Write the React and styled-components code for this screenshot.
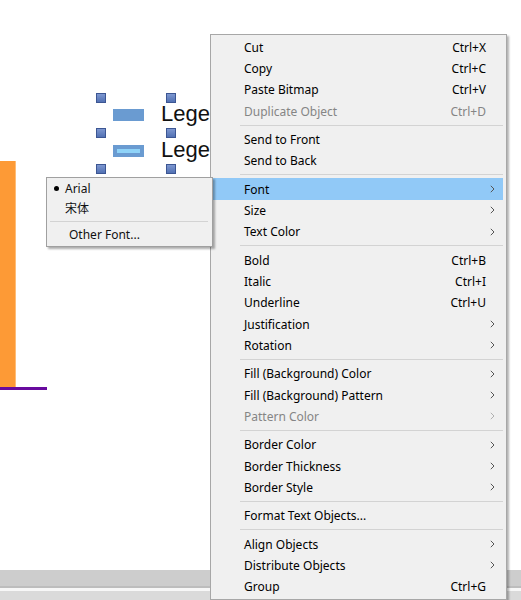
import React from 'react';
import styled, { createGlobalStyle } from 'styled-components';

const GlobalStyle = createGlobalStyle`
  html, body {
    margin: 0;
    padding: 0;
    background: #ffffff;
    overflow: hidden;
  }
`;

const Window = styled.div`
  position: relative;
  width: 521px;
  height: 600px;
  display: flex;
  flex-direction: column;
  overflow: hidden;
  font-family: "Noto Sans", "Noto Sans CJK SC", sans-serif;
`;

const Canvas = styled.div`
  position: relative;
  flex: 1;
  background: #ffffff;
`;

const BottomArea = styled.div`
  display: flex;
  flex-direction: column;
  height: 30px;
`;

const ScrollTrack = styled.div`
  height: 16px;
  background: #cdcdcd;
  border-bottom: 2px solid #bdbdbd;
`;

const Gap = styled.div`
  height: 3px;
  background: #f7f7f7;
`;

const StatusBar = styled.div`
  flex: 1;
  background: #dadada;
`;

/* chart objects sitting on the canvas */
const Bar = styled.div`
  position: absolute;
  left: 0;
  top: 161px;
  width: 16px;
  height: 226px;
  background: #fd9a36;
  box-shadow: inset -1px 0 0 #ffbd77;
`;

const Axis = styled.div`
  position: absolute;
  left: 0;
  top: 387px;
  width: 47px;
  height: 2.5px;
  background: #680a9e;
`;

const Handle = styled.div`
  position: absolute;
  left: ${p => p.x}px;
  top: ${p => p.y}px;
  width: 8px;
  height: 8px;
  background: linear-gradient(#7d97d0, #5271b3);
  border: 1px solid #3c5693;
`;

const Swatch = styled.div`
  position: absolute;
  left: 113px;
  top: ${p => p.y}px;
  width: 31px;
  height: 12px;
  background: #6a9bd1;
  display: flex;
  align-items: center;
  justify-content: center;
`;

const SwatchLine = styled.div`
  width: 23px;
  height: 4px;
  background: #8fd3f8;
`;

const LegendText = styled.div`
  position: absolute;
  left: 161px;
  top: ${p => p.y}px;
  font-family: "Liberation Sans", Arial, sans-serif;
  font-size: 22px;
  line-height: 22px;
  color: #111;
  white-space: nowrap;
`;

/* context menu */
const Menu = styled.div`
  position: absolute;
  left: 210px;
  top: 34px;
  width: 290px;
  padding: 1.5px 3px 2px 2px;
  background: #f0f0f0;
  border: 1px solid #a7a7a7;
  box-shadow: 2px 2px 2px rgba(0, 0, 0, 0.3);
  font-size: 12px;
  color: #000;
`;

const Item = styled.div`
  display: grid;
  grid-template-columns: 1fr auto 17px;
  align-items: center;
  height: 21.33px;
  padding-left: 31px;
  background: ${p => (p.$active ? '#91c9f7' : 'transparent')};
  color: ${p => (p.$disabled ? '#858585' : '#000')};
  white-space: nowrap;
`;

const Shortcut = styled.span`
  text-align: right;
`;

const ArrowCell = styled.span`
  display: flex;
  align-items: center;
  padding-left: 4px;
`;

const Separator = styled.div`
  height: 7px;
  display: flex;
  align-items: center;
  margin-left: ${p => p.$inset}px;
  margin-right: ${p => p.$right || 0}px;

  &::after {
    content: '';
    flex: 1;
    height: 1px;
    background: #d3d3d3;
  }
`;

const SubMenu = styled.div`
  position: absolute;
  left: 46px;
  top: 177px;
  width: 165px;
  padding: 0.5px 0 2px 0;
  background: #f0f0f0;
  border: 1px solid #a0a0a0;
  box-shadow: 2px 2px 2px rgba(0, 0, 0, 0.32);
  font-size: 12px;
  color: #000;
`;

const SubItem = styled.div`
  display: flex;
  align-items: center;
  height: 19.5px;
  padding-left: ${p => p.$indent}px;
  white-space: nowrap;
  color: #111;
`;

const Bullet = styled.span`
  position: absolute;
  left: 7px;
  width: 5px;
  height: 5px;
  border-radius: 50%;
  background: #000;
`;

const BulletRow = styled(SubItem)`
  position: relative;
`;

const Chevron = ({ disabled }) => (
  <svg width="5" height="8" viewBox="0 0 5 8">
    <path d="M0.8 0.8 L4 4 L0.8 7.2" fill="none" stroke={disabled ? '#b0b0b0' : '#555'} strokeWidth="1" />
  </svg>
);

const groups = [
  [
    { label: 'Cut', key: 'Ctrl+X' },
    { label: 'Copy', key: 'Ctrl+C' },
    { label: 'Paste Bitmap', key: 'Ctrl+V' },
    { label: 'Duplicate Object', key: 'Ctrl+D', disabled: true },
  ],
  [{ label: 'Send to Front' }, { label: 'Send to Back' }],
  [
    { label: 'Font', sub: true, active: true },
    { label: 'Size', sub: true },
    { label: 'Text Color', sub: true },
  ],
  [
    { label: 'Bold', key: 'Ctrl+B' },
    { label: 'Italic', key: 'Ctrl+I' },
    { label: 'Underline', key: 'Ctrl+U' },
    { label: 'Justification', sub: true },
    { label: 'Rotation', sub: true },
  ],
  [
    { label: 'Fill (Background) Color', sub: true },
    { label: 'Fill (Background) Pattern', sub: true },
    { label: 'Pattern Color', sub: true, disabled: true },
  ],
  [
    { label: 'Border Color', sub: true },
    { label: 'Border Thickness', sub: true },
    { label: 'Border Style', sub: true },
  ],
  [{ label: 'Format Text Objects...' }],
  [
    { label: 'Align Objects', sub: true },
    { label: 'Distribute Objects', sub: true },
    { label: 'Group', key: 'Ctrl+G' },
  ],
];

const handles = [
  [96, 93], [166, 93],
  [96, 128], [166, 128],
  [96, 164], [166, 164],
];

const App = () => {
  return (
    <Window>
      <GlobalStyle />
      <Canvas>
        <Bar />
        <Axis />
        {handles.map(([x, y], i) => (
          <Handle key={i} x={x} y={y} />
        ))}
        <Swatch y={109} />
        <LegendText y={103}>Legend 1</LegendText>
        <Swatch y={145}>
          <SwatchLine />
        </Swatch>
        <LegendText y={139}>Legend 2</LegendText>
      </Canvas>
      <BottomArea>
        <ScrollTrack />
        <Gap />
        <StatusBar />
      </BottomArea>

      <Menu>
        {groups.map((group, gi) => (
          <React.Fragment key={gi}>
            {gi > 0 && <Separator $inset={27} />}
            {group.map(item => (
              <Item key={item.label} $active={item.active} $disabled={item.disabled}>
                <span>{item.label}</span>
                <Shortcut>{item.key}</Shortcut>
                <ArrowCell>{item.sub && <Chevron disabled={item.disabled} />}</ArrowCell>
              </Item>
            ))}
          </React.Fragment>
        ))}
      </Menu>

      <SubMenu>
        <BulletRow $indent={18}>
          <Bullet />
          Arial
        </BulletRow>
        <SubItem $indent={18}>宋体</SubItem>
        <Separator $inset={3} $right={4} />
        <SubItem $indent={22}>Other Font...</SubItem>
      </SubMenu>
    </Window>
  );
};

export default App;
